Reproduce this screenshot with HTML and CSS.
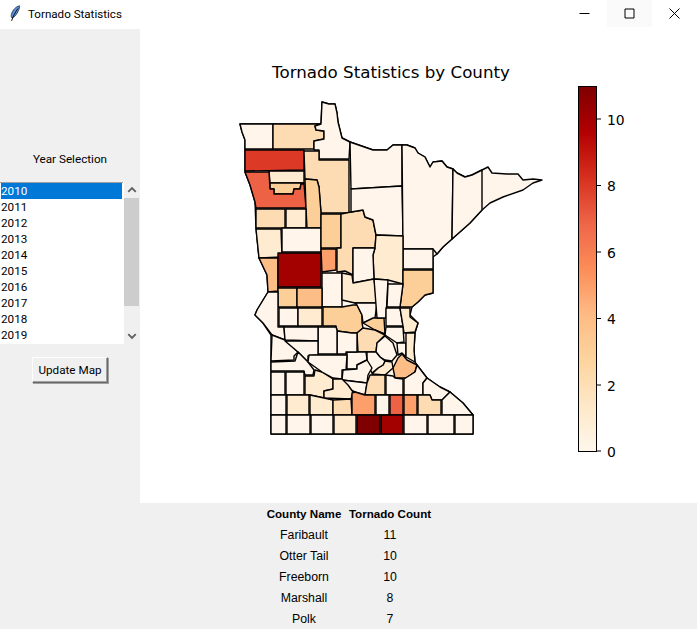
FILE: index.html
```html
<!DOCTYPE html>
<html lang="en">
<head>
  <meta charset="UTF-8">
  <title>Tornado Statistics</title>
  <link rel="stylesheet" href="styles.css">
</head>
<body>
  <div class="window">
    <div class="titlebar">
      <svg class="feather" width="12" height="17" viewBox="0 0 12 17">
        <path class="feather-vane" d="M10.5 0.8C7 1.5 3.5 5 2.4 9.5C2 11 2.2 12.4 3 13C5.5 12.5 8 9 9.5 5.5C10.2 3.8 10.8 2 10.5 0.8Z"/>
        <path class="feather-quill" d="M9 3.5C6.5 7 4 11 2.6 15.8"/>
      </svg>
      <span class="window-title">Tornado Statistics</span>
      <div class="controls">
        <div class="control">
          <svg width="11" height="11" viewBox="0 0 11 11"><path d="M0.5 5.5H10.5"/></svg>
        </div>
        <div class="control control-hover">
          <svg width="11" height="11" viewBox="0 0 11 11"><path d="M1 1H10V10H1Z"/></svg>
        </div>
        <div class="control">
          <svg width="11" height="11" viewBox="0 0 11 11"><path d="M0.5 0.5L10.5 10.5M10.5 0.5L0.5 10.5"/></svg>
        </div>
      </div>
    </div>

    <div class="main">
      <div class="sidebar">
        <div class="year-label">Year Selection</div>
        <div class="listbox">
          <ul class="years">
            <li class="selected">2010</li>
            <li>2011</li>
            <li>2012</li>
            <li>2013</li>
            <li>2014</li>
            <li>2015</li>
            <li>2016</li>
            <li>2017</li>
            <li>2018</li>
            <li>2019</li>
          </ul>
          <div class="scrollbar">
            <svg class="arrow" width="16" height="16" viewBox="0 0 17 16"><path d="M4.5 10L8.5 6L12.5 10"/></svg>
            <div class="thumb"></div>
            <svg class="arrow" width="16" height="16" viewBox="0 0 17 16"><path d="M4.5 6L8.5 10L12.5 6"/></svg>
          </div>
        </div>
        <button class="update">Update Map</button>
      </div>

      <svg class="figure" width="557" height="474" viewBox="140 29 557 474">
        <defs>
          <linearGradient id="orrd" x1="0" y1="1" x2="0" y2="0">
            <stop offset="0" stop-color="#fff7ec"/>
            <stop offset="0.125" stop-color="#fee8c8"/>
            <stop offset="0.25" stop-color="#fdd49e"/>
            <stop offset="0.375" stop-color="#fdbb84"/>
            <stop offset="0.5" stop-color="#fc8d59"/>
            <stop offset="0.625" stop-color="#ef6548"/>
            <stop offset="0.75" stop-color="#d7301f"/>
            <stop offset="0.875" stop-color="#b30000"/>
            <stop offset="1" stop-color="#7f0000"/>
          </linearGradient>
        </defs>

        <text class="plot-title" x="391" y="78">Tornado Statistics by County</text>

        <g class="counties">
          <!-- whole state first, so no white shows between counties -->
          <polygon class="v0" points="240,124 321,124 322,102 329,104 335,104 337,113 338,122 342,138 350,142 373,150 387,150 393,145 402,145 407,145 415,148 418,153 425,157 430,167 433,162 442,161 447,167 453,169 457,173 465,177 472,175 482,170 488,167 492,173 507,174 518,174 523,180 533,179 542,180 533,183 523,190 503,197 490,203 482,210 470,223 452,239 443,247 437,254 433,257 433,293 425,295 418,302 412,307 410,315 418,323 415,333 414,350 415,362 417,365 427,378 440,387 450,392 463,403 473,415 473,434 271,434 271,335 263,323 255,315 257,310 268,292 267,275 259,258 256,228 255,202 250,185 245,172 245,140 242,132"/>
          <!-- north -->
          <polygon class="v0" points="240,124 273,124 273,149 245,149 245,140 242,132"/>
          <polygon class="v2" points="273,124 321,124 315,126 316,130 324,131 324,139 314,141 314,149 273,149"/>
          <polygon class="v0" points="321,124 322,102 329,104 335,104 337,113 338,122 342,138 350,142 349,159 319,159 319,150 314,150 314,141 324,139 324,131 316,130 315,126"/>
          <polygon class="v8" points="245,150 304,150 304,170 245,171"/>
          <polygon class="v1" points="269,171 304,171 304,183 270,183"/>
          <polygon class="v3" points="270,183 304,183 304,184 301,184 300,189 294,189 293,194 274,194 274,189 270,189"/>
          <polygon class="v7" points="245,172 269,172 270,189 274,189 274,194 293,194 294,189 300,189 301,184 304,184 306,208 256,208 255,202 250,185"/>
          <polygon class="v2" points="304,151 319,151 319,160 349,160 349,213 321,213 319,187 317,180 305,179"/>
          <polygon class="v3" points="305,179 317,180 319,187 321,213 321,228 307,228 306,208"/>
          <polygon class="v2" points="256,209 285,209 285,228 256,228"/>
          <polygon class="v1" points="286,209 306,209 306,228 286,228"/>
          <polygon class="v1" points="256,229 281,229 282,257 259,258"/>
          <polygon class="v0" points="282,228 321,228 321,252 282,252"/>
          <polygon class="v3" points="321,214 341,214 341,248 321,248"/>
          <polygon class="v2" points="341,214 351,212 363,210 365,217 373,220 376,235 375,248 353,248 353,275 345,271 337,272 337,248 341,248"/>
          <polygon class="v0" points="350,142 373,150 387,150 393,145 402,145 402,186 351,189"/>
          <polygon class="v0" points="351,189 402,186 403,236 376,235 373,220 365,217 363,210 351,212"/>
          <polygon class="v0" points="402,145 407,145 415,148 418,153 425,157 430,167 433,162 442,161 447,167 453,169 452,239 443,247 437,254 433,249 403,249"/>
          <polygon class="v0" points="453,169 457,173 465,177 472,175 482,170 482,210 470,223 452,239"/>
          <polygon class="v0" points="403,249 433,249 433,269 403,269"/>
          <polygon class="v1" points="376,235 403,236 403,284 388,280 374,279 373,255 375,248"/>
          <polygon class="v0" points="353,248 375,248 373,255 374,279 353,283"/>
          <polygon class="v3" points="403,270 433,270 433,293 425,295 418,302 412,307 400,307 403,284"/>
          <!-- middle -->
          <polygon class="v4" points="259,258 278,258 278,291 268,292 267,275"/>
          <polygon class="v10" points="278,253 321,253 321,287 278,287"/>
          <polygon class="v5" points="321,249 336,249 336,270 322,272"/>
          <polygon class="v0" points="322,273 342,273 342,307 322,307"/>
          <polygon class="v1" points="342,273 352,275 353,283 374,279 377,303 355,303 342,300"/>
          <polygon class="v3" points="278,288 297,288 297,307 278,307"/>
          <polygon class="v4" points="297,288 322,288 322,307 297,307"/>
          <polygon class="v0" points="268,292 278,292 278,327 284,327 285,340 272,335 263,323 255,315 257,310"/>
          <polygon class="v0" points="279,308 298,308 298,326 279,326"/>
          <polygon class="v1" points="298,308 322,308 322,326 298,326"/>
          <polygon class="v3" points="323,307 342,307 353,305 357,305 362,315 362,323 363,328 357,333 352,333 337,331 336,326 323,326"/>
          <polygon class="v0" points="355,303 377,303 375,318 363,323 362,315 357,305"/>
          <polygon class="v3" points="363,323 373,318 384,318 385,334 375,330"/>
          <polygon class="v0" points="374,279 388,280 386,318 377,318"/>
          <polygon class="v0" points="388,284 403,284 400,307 387,307"/>
          <polygon class="v0" points="386,308 400,308 403,326 386,326"/>
          <polygon class="v1" points="400,308 410,308 410,317 418,323 415,332 404,333 403,326"/>
          <polygon class="v0" points="386,327 403,327 404,342 397,343 385,335"/>
          <polygon class="v2" points="363,328 375,330 385,335 377,343 376,352 367,352 358,352 357,333"/>
          <polygon class="v0" points="385,336 393,343 397,355 392,361 385,360 380,357 376,352 377,343"/>
          <polygon class="v0" points="397,343 406,343 406,357 402,353 398,355"/>
          <polygon class="v1" points="406,333 415,333 414,350 415,362 406,357"/>
          <polygon class="v4" points="402,354 407,360 417,365 415,372 406,378 395,378 393,368 398,358"/>
          <polygon class="v1" points="385,361 392,362 393,368 385,375 372,374 378,368 383,365"/>
          <polygon class="v0" points="367,352 376,352 380,357 385,361 383,365 378,368 372,373 367,363"/>
          <polygon class="v0" points="347,352 366,352 367,360 357,365 357,369 347,369"/>
          <polygon class="v0" points="337,331 352,333 357,333 357,352 346,352 346,354 337,354"/>
          <polygon class="v0" points="318,327 336,327 337,330 337,354 318,354"/>
          <polygon class="v0" points="284,327 318,327 318,341 285,340"/>
          <!-- south -->
          <polygon class="v0" points="272,335 285,340 298,352 294,356 294,360 271,361"/>
          <polygon class="v0" points="285,341 318,341 318,355 308,356 308,362 298,352"/>
          <polygon class="v0" points="271,362 295,361 298,352 308,362 314,370 313,375 305,375 304,371 271,371"/>
          <polygon class="v0" points="271,372 285,372 285,395 271,395"/>
          <polygon class="v0" points="286,372 304,372 304,395 286,395"/>
          <polygon class="v1" points="305,376 314,376 315,370 322,372 333,379 333,389 324,391 324,398 310,395 305,395"/>
          <polygon class="v0" points="309,355 347,355 346,370 342,370 342,379 333,378 322,372 308,362"/>
          <polygon class="v0" points="343,370 357,369 357,365 367,360 372,368 368,375 367,383 342,380"/>
          <polygon class="v0" points="342,380 367,383 365,395 355,392 345,387"/>
          <polygon class="v2" points="370,375 385,375 385,395 365,395 367,383"/>
          <polygon class="v0" points="386,375 393,376 395,378 403,379 403,395 386,395"/>
          <polygon class="v0" points="404,379 415,372 417,365 427,378 423,383 423,395 404,395"/>
          <polygon class="v0" points="423,383 427,378 440,387 450,392 442,400 432,400 430,395 423,395"/>
          <polygon class="v1" points="333,379 342,379 348,385 353,392 351,399 324,398 324,391 333,389"/>
          <polygon class="v0" points="271,395 286,395 286,415 271,415"/>
          <polygon class="v1" points="287,395 309,395 309,415 287,415"/>
          <polygon class="v1" points="310,395 324,398 333,400 333,415 310,415"/>
          <polygon class="v2" points="333,400 351,399 352,415 333,415"/>
          <polygon class="v5" points="352,393 355,392 365,395 375,395 375,415 352,415"/>
          <polygon class="v0" points="376,395 389,395 389,415 376,415"/>
          <polygon class="v7" points="390,395 403,395 403,415 390,415"/>
          <polygon class="v5" points="404,395 417,395 417,415 404,415"/>
          <polygon class="v2" points="418,395 430,395 432,400 441,400 441,415 418,415"/>
          <polygon class="v0" points="442,400 450,392 463,403 473,415 442,415"/>
          <polygon class="v0" points="271,415 286,415 286,434 271,434"/>
          <polygon class="v0" points="287,415 310,415 310,434 287,434"/>
          <polygon class="v0" points="311,415 333,415 333,434 311,434"/>
          <polygon class="v1" points="334,415 356,415 356,434 334,434"/>
          <polygon class="v11" points="357,415 380,415 380,434 357,434"/>
          <polygon class="v10" points="381,415 403,415 403,434 381,434"/>
          <polygon class="v0" points="404,415 427,415 427,434 404,434"/>
          <polygon class="v0" points="428,415 454,415 454,434 428,434"/>
          <polygon class="v0" points="455,415 473,415 473,434 455,434"/>
        </g>

        <rect class="colorbar" x="578.5" y="86.5" width="18" height="365" fill="url(#orrd)"/>
        <g class="ticks">
          <path d="M597 451H601M597 385H601M597 318.500H601M597 252H601M597 185.500H601M597 119H601"/>
        </g>
        <g class="tick-labels">
          <text x="607" y="457">0</text>
          <text x="607" y="391">2</text>
          <text x="607" y="324">4</text>
          <text x="607" y="258">6</text>
          <text x="607" y="191">8</text>
          <text x="607" y="125">10</text>
        </g>
      </svg>
    </div>

    <div class="bottom">
      <div class="stats">
        <div class="head">County Name</div>
        <div class="head">Tornado Count</div>
        <div>Faribault</div>
        <div>11</div>
        <div>Otter Tail</div>
        <div>10</div>
        <div>Freeborn</div>
        <div>10</div>
        <div>Marshall</div>
        <div>8</div>
        <div>Polk</div>
        <div>7</div>
      </div>
    </div>
  </div>
</body>
</html>
```

FILE: styles.css
```css
html, body {
  margin: 0;
  padding: 0;
  background-color: #ffffff;
}
.window {
  width: 697px;
  height: 629px;
  display: flex;
  flex-direction: column;
  overflow: hidden;
  font-family: Roboto, Arial, sans-serif;
  font-size: 11.7px;
  color: #000000;
}

/* title bar */
.titlebar {
  height: 29px;
  flex-shrink: 0;
  display: flex;
  align-items: center;
  padding-left: 9px;
  background-color: #ffffff;
}
.feather {
  margin-right: 7px;
  margin-top: -2px;
}
.feather-vane {
  fill: #5b8fd6;
  stroke: #1d2a44;
  stroke-width: 0.8;
}
.feather-quill {
  fill: none;
  stroke: #101010;
  stroke-width: 1;
}
.window-title {
  font-size: 11.6px;
  margin-top: -1px;
}
.controls {
  margin-left: auto;
  display: flex;
  align-self: flex-start;
}
.control {
  width: 45px;
  height: 27px;
  display: flex;
  align-items: center;
  justify-content: center;
}
.control-hover {
  background-color: #fafafa;
}
.control svg {
  fill: none;
  stroke: #000000;
  stroke-width: 1;
}

/* main row */
.main {
  display: flex;
  height: 474px;
  flex-shrink: 0;
}
.sidebar {
  width: 140px;
  background-color: #f0f0f0;
  display: flex;
  flex-direction: column;
  align-items: center;
  padding-top: 121px;
  box-sizing: border-box;
}
.year-label {
  height: 32px;
  line-height: 18px;
  width: 137px;
  text-align: center;
}
.listbox {
  width: 140px;
  height: 162px;
  display: flex;
}
.years {
  list-style: none;
  margin: 0;
  padding: 0 1px 0 1px;
  width: 123px;
  box-sizing: border-box;
  background-color: #ffffff;
  border-top: 1px solid #a0a0a0;
  line-height: 16px;
}
.years li {
  height: 16px;
}
.years .selected {
  background-color: #0078d7;
  color: #ffffff;
}
.scrollbar {
  flex: 1;
  display: flex;
  flex-direction: column;
  background-color: #f0f0f0;
  border-left: 1px solid #ffffff;
}
.arrow {
  fill: none;
  stroke: #606060;
  stroke-width: 2;
  flex-shrink: 0;
}
.thumb {
  width: 15px;
  height: 108px;
  background-color: #cdcdcd;
}
.scrollbar .arrow:last-child {
  margin-top: auto;
}
.update {
  width: 76px;
  height: 26px;
  margin-top: 13px;
  padding: 0;
  font-family: inherit;
  font-size: 11.7px;
  background-color: #f0f0f0;
  color: #000000;
  border: 1px solid;
  border-color: #ffffff #696969 #696969 #ffffff;
  box-shadow: 1px 1px 0 #a0a0a0, inset -1px -1px 0 #a0a0a0;
}
.figure {
  display: block;
  background-color: #ffffff;
}

/* plot */
.plot-title {
  font-family: "DejaVu Sans", sans-serif;
  font-size: 16.7px;
  text-anchor: middle;
}
.counties polygon {
  stroke: #000000;
  stroke-width: 1.4;
  stroke-linejoin: round;
}
.v0 { fill: #fff5ea; }
.v1 { fill: #feebd0; }
.v2 { fill: #fddcb4; }
.v3 { fill: #fdcf98; }
.v4 { fill: #fdbd87; }
.v5 { fill: #fc9f6b; }
.v7 { fill: #ed6245; }
.v8 { fill: #dc3a27; }
.v10 { fill: #a30000; }
.v11 { fill: #7f0000; }
.colorbar {
  stroke: #000000;
  stroke-width: 1;
}
.ticks path {
  stroke: #000000;
  stroke-width: 1;
  fill: none;
}
.tick-labels text {
  font-family: "DejaVu Sans", sans-serif;
  font-size: 13.9px;
  fill: #000000;
}

/* table under the map */
.bottom {
  flex: 1;
  background-color: #f0f0f0;
  display: flex;
  justify-content: center;
}
.stats {
  display: grid;
  grid-template-columns: 81px 87px;
  grid-template-rows: 22px;
  grid-auto-rows: 21px;
  column-gap: 2px;
  text-align: center;
  line-height: 21px;
  font-family: "Liberation Sans", Arial, sans-serif;
  font-size: 12.3px;
}
.head {
  font-weight: bold;
  font-size: 11.6px;
}
```
